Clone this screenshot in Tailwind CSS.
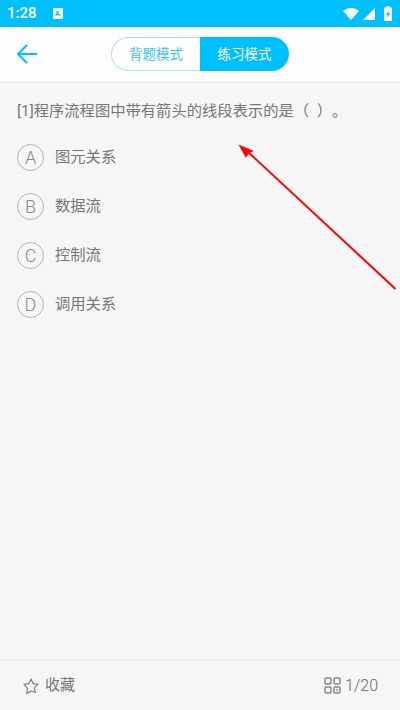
<!DOCTYPE html>
<html lang="zh-CN">
<head>
    <meta charset="UTF-8">
    <meta name="viewport" content="width=device-width, initial-scale=1.0">
    <title>练习模式</title>
    <script src="https://cdn.jsdelivr.net/npm/@tailwindcss/browser@4"></script>
</head>
<body class="bg-[#f6f6f6] font-['Roboto','Noto_Sans_CJK_SC',sans-serif]">
    <div class="relative flex flex-col w-[400px] h-[710px] overflow-hidden">
        <!-- Status bar -->
        <div class="flex items-center h-[27px] bg-[#00bfff] text-white pl-[7px] pr-[8px] shrink-0">
            <span class="text-[15px] leading-none font-medium">1:28</span>
            <span class="ml-[16px] flex items-center justify-center w-[10px] h-[11px] bg-white rounded-[1px] text-[#00bfff] text-[8px] font-bold leading-none">A</span>
            <div class="ml-auto flex items-center gap-[4px]">
                <svg width="16" height="12" viewBox="0 0 16 12"><path d="M0 3C4.500 -1 11.500 -1 16 3L8 12Z" fill="#fff"/></svg>
                <svg width="12" height="12" viewBox="0 0 12 12"><path d="M12 0V12H0Z" fill="#fff"/></svg>
                <svg class="ml-[5px]" width="8" height="15" viewBox="0 0 8 15"><path d="M2.500 0H5.500V1.500H8V15H0V1.500H2.500Z" fill="#fff"/><path d="M5 3.500 2 8.800H3.700L3.100 12.500 6 7H4.300Z" fill="#00bfff"/></svg>
            </div>
        </div>

        <!-- Header -->
        <div class="relative flex items-center justify-center h-[56px] bg-[#fdfdfd] border-b border-[#e8e8e8] shrink-0">
            <svg class="absolute left-[16px] top-[16px]" width="22" height="22" viewBox="0 0 22 22" fill="none" stroke="#00bfff" stroke-width="2" stroke-linecap="round" stroke-linejoin="round"><path d="M20.500 11H2M10.500 2.500 2 11l8.500 8.500"/></svg>
            <div class="flex w-[178px] h-[34px] -mt-[1px]">
                <div class="flex w-[89px] items-center justify-center bg-white border border-[#a6e5fb] border-r-0 rounded-l-full text-[13.5px] text-[#36c5f5]">背题模式</div>
                <div class="flex w-[89px] items-center justify-center bg-[#00bfff] rounded-r-full text-[13.5px] text-white">练习模式</div>
            </div>
        </div>

        <!-- Question -->
        <main class="flex-1 px-[17px] pt-[17px]">
            <p class="text-[15.3px] leading-[22px] text-[#777777] [text-spacing-trim:space-all]">[1]程序流程图中带有箭头的线段表示的是（&nbsp;&nbsp;）。</p>
            <ul class="mt-[22px] flex flex-col gap-[22px]">
                <li class="flex items-center gap-[11px] text-[15.3px] text-[#777777]">
                    <span class="flex items-center justify-center w-[27px] h-[27px] rounded-full border-[1.5px] border-[#b0b0b0] text-[#888888] text-[18px] font-light shrink-0">A</span>
                    <span>图元关系</span>
                </li>
                <li class="flex items-center gap-[11px] text-[15.3px] text-[#777777]">
                    <span class="flex items-center justify-center w-[27px] h-[27px] rounded-full border-[1.5px] border-[#b0b0b0] text-[#888888] text-[18px] font-light shrink-0">B</span>
                    <span>数据流</span>
                </li>
                <li class="flex items-center gap-[11px] text-[15.3px] text-[#777777]">
                    <span class="flex items-center justify-center w-[27px] h-[27px] rounded-full border-[1.5px] border-[#b0b0b0] text-[#888888] text-[18px] font-light shrink-0">C</span>
                    <span>控制流</span>
                </li>
                <li class="flex items-center gap-[11px] text-[15.3px] text-[#777777]">
                    <span class="flex items-center justify-center w-[27px] h-[27px] rounded-full border-[1.5px] border-[#b0b0b0] text-[#888888] text-[18px] font-light shrink-0">D</span>
                    <span>调用关系</span>
                </li>
            </ul>
        </main>

        <!-- Bottom bar -->
        <div class="flex items-center justify-between h-[50px] border-t border-[#ececec] pl-[23px] pr-[22px] shrink-0 text-[15px] text-[#777777]">
            <div class="flex items-center gap-[6px]">
                <svg width="16" height="16" viewBox="0 0 16 16" fill="none" stroke="#777777" stroke-width="1.100" stroke-linejoin="round"><path d="M8 1l2.100 4.600 5 .6-3.700 3.400 1 4.900L8 13.100l-4.400 2.400 1-4.900L.9 6.200l5-.6Z"/></svg>
                <span>收藏</span>
            </div>
            <div class="flex items-center gap-[4px]">
                <svg width="17" height="17" viewBox="0 0 17 17" fill="none" stroke="#888888" stroke-width="1.500"><rect x="1" y="1" width="6" height="6" rx="1.200"/><rect x="10" y="1" width="6" height="6" rx="1.200"/><rect x="1" y="10" width="6" height="6" rx="1.200"/><rect x="10" y="10" width="6" height="6" rx="1.200"/><circle cx="13" cy="13" r="1" fill="#888888" stroke="none"/></svg>
                <span class="text-[16px] font-light text-[#666666]">1/20</span>
            </div>
        </div>

        <!-- Red annotation arrow -->
        <svg class="absolute inset-0 pointer-events-none" width="400" height="710" viewBox="0 0 400 710" fill="none">
            <path d="M395.500 289 247 151" stroke="#ff0000" stroke-width="2"/>
            <path d="M238.500 144.500 254 151 249 153 246 158Z" fill="#ff0000"/>
        </svg>
    </div>
</body>
</html>
